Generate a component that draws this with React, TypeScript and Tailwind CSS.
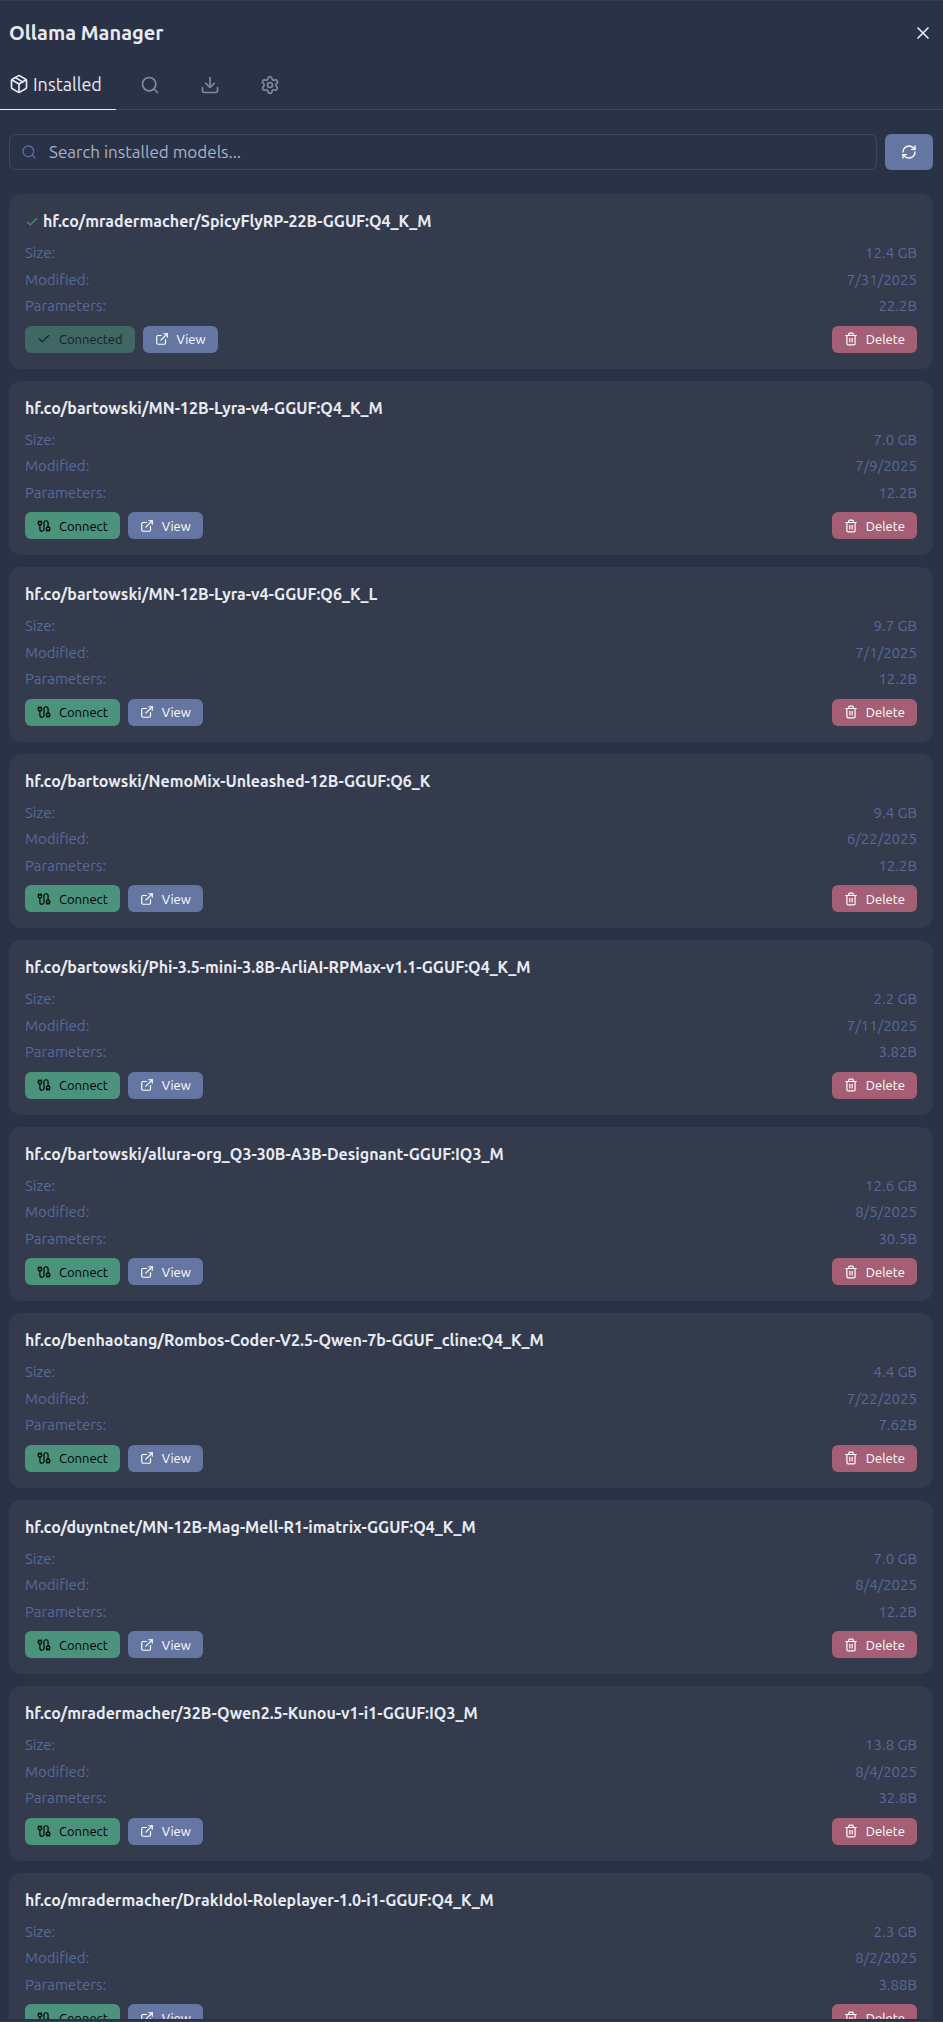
import { useState } from "react";
import { Package, Search, Download, Settings, X, RefreshCw, Check, Cable, ExternalLink, Trash2 } from "lucide-react";

type Model = { name: string; size: string; modified: string; parameters: string; connected?: boolean };

const models: Model[] = [
  { name: "hf.co/mradermacher/SpicyFlyRP-22B-GGUF:Q4_K_M", size: "12.4 GB", modified: "7/31/2025", parameters: "22.2B", connected: true },
  { name: "hf.co/bartowski/MN-12B-Lyra-v4-GGUF:Q4_K_M", size: "7.0 GB", modified: "7/9/2025", parameters: "12.2B" },
  { name: "hf.co/bartowski/MN-12B-Lyra-v4-GGUF:Q6_K_L", size: "9.7 GB", modified: "7/1/2025", parameters: "12.2B" },
  { name: "hf.co/bartowski/NemoMix-Unleashed-12B-GGUF:Q6_K", size: "9.4 GB", modified: "6/22/2025", parameters: "12.2B" },
  { name: "hf.co/bartowski/Phi-3.5-mini-3.8B-ArliAI-RPMax-v1.1-GGUF:Q4_K_M", size: "2.2 GB", modified: "7/11/2025", parameters: "3.82B" },
  { name: "hf.co/bartowski/allura-org_Q3-30B-A3B-Designant-GGUF:IQ3_M", size: "12.6 GB", modified: "8/5/2025", parameters: "30.5B" },
  { name: "hf.co/benhaotang/Rombos-Coder-V2.5-Qwen-7b-GGUF_cline:Q4_K_M", size: "4.4 GB", modified: "7/22/2025", parameters: "7.62B" },
  { name: "hf.co/duyntnet/MN-12B-Mag-Mell-R1-imatrix-GGUF:Q4_K_M", size: "7.0 GB", modified: "8/4/2025", parameters: "12.2B" },
  { name: "hf.co/mradermacher/32B-Qwen2.5-Kunou-v1-i1-GGUF:IQ3_M", size: "13.8 GB", modified: "8/4/2025", parameters: "32.8B" },
  { name: "hf.co/mradermacher/DrakIdol-Roleplayer-1.0-i1-GGUF:Q4_K_M", size: "2.3 GB", modified: "8/2/2025", parameters: "3.88B" },
];

function Detail({ label, value }: { label: string; value: string }) {
  return (
    <div className="flex justify-between">
      <dt>{label}</dt>
      <dd>{value}</dd>
    </div>
  );
}

const actionButton = "flex h-[27px] items-center gap-2 rounded-md px-3 text-[13px] leading-4";

function ModelCard({ model }: { model: Model }) {
  return (
    <li className="rounded-xl bg-[#333b4d] p-4">
      <h2 className="flex items-center gap-1 text-base leading-[23px] font-bold text-[#e8eaf2]">
        {model.connected && <Check size={14} strokeWidth={2} className="text-[#4b937c]" />}
        {model.name}
      </h2>
      <dl className="mt-[9px] flex flex-col gap-1 text-[15px] leading-normal text-[#5a6a98]">
        <Detail label="Size:" value={model.size} />
        <Detail label="Modified:" value={model.modified} />
        <Detail label="Parameters:" value={model.parameters} />
      </dl>
      <div className="mt-2 flex gap-2">
        {model.connected ? (
          <button disabled className={`${actionButton} bg-[#4b937c] text-black opacity-50`}>
            <Check size={14} />
            Connected
          </button>
        ) : (
          <button className={`${actionButton} bg-[#4b937c] text-black`}>
            <Cable size={14} />
            Connect
          </button>
        )}
        <button className={`${actionButton} bg-[#6576a3] text-white`}>
          <ExternalLink size={14} />
          View
        </button>
        <button className={`${actionButton} ml-auto bg-[#a55f74] text-white`}>
          <Trash2 size={14} />
          Delete
        </button>
      </div>
    </li>
  );
}

const iconTabs = [
  { label: "Search", Icon: Search },
  { label: "Downloads", Icon: Download },
  { label: "Settings", Icon: Settings },
];

export default function App() {
  const [query, setQuery] = useState("");
  const shown = models.filter((m) => m.name.toLowerCase().includes(query.toLowerCase()));

  return (
    <div className="flex h-screen flex-col overflow-hidden border-y border-[#333b4d] bg-[#2a3247] pb-0.5 font-['Ubuntu','Noto_Sans',sans-serif] text-[#e8eaf2]">
      <header className="flex h-16 shrink-0 items-center justify-between pr-2.5 pl-[9px]">
        <h1 className="text-xl leading-7 font-bold">Ollama Manager</h1>
        <button aria-label="Close">
          <X size={20} strokeWidth={2} />
        </button>
      </header>
      <nav className="flex h-[45px] shrink-0 border-b border-[#3a4866]">
        <button className="-mb-px mr-1 flex w-[116px] items-center gap-1 border-b border-[#e8eaf2] pb-1.5 pl-[9px] text-lg leading-7">
          <Package size={20} strokeWidth={2} />
          Installed
        </button>
        {iconTabs.map(({ label, Icon }) => (
          <button key={label} aria-label={label} className="flex w-15 items-center justify-center pb-1 text-[#858a98]">
            <Icon size={20} strokeWidth={2} />
          </button>
        ))}
      </nav>
      <main className="flex min-h-0 grow flex-col overflow-hidden pt-6 pr-2.5 pl-[9px]">
        <div className="flex shrink-0 gap-2">
          <label className="flex h-9 grow items-center gap-3 rounded-md border border-[#3a4866] px-[11px]">
            <Search size={16} className="text-[#5a6fa5]" />
            <input
              aria-label="Search installed models"
              value={query}
              onChange={(e) => setQuery(e.target.value)}
              placeholder="Search installed models..."
              className="grow bg-transparent text-[17px] leading-7 outline-none placeholder:text-[#aab1c4]"
            />
          </label>
          <button aria-label="Refresh" className="flex w-12 items-center justify-center rounded-md bg-[#6576a3] text-white">
            <RefreshCw size={16} />
          </button>
        </div>
        <ul className="mt-6 flex flex-col gap-3">
          {shown.map((m) => (
            <ModelCard key={m.name} model={m} />
          ))}
        </ul>
      </main>
    </div>
  );
}
